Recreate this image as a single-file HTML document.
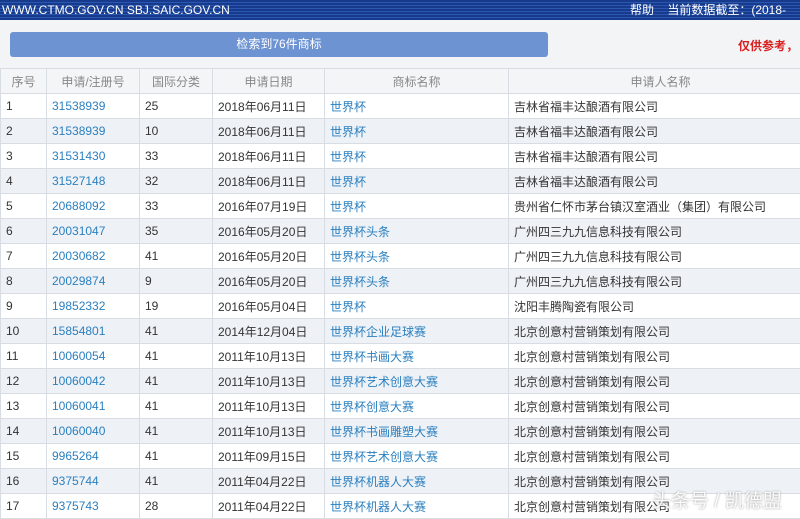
<!DOCTYPE html><html><head><meta charset="utf-8"><style>
*{margin:0;padding:0;box-sizing:border-box}
body{width:800px;height:518px;overflow:hidden;background:#fff;font-family:"Liberation Sans","Noto Sans CJK SC",sans-serif;position:relative}
.top{position:absolute;left:0;top:0;width:800px;height:20px;background:repeating-linear-gradient(180deg,#173a8c 0 2px,#2a57b0 2px 3px);color:#fff;font-size:12px;line-height:20px}
.top .l{position:absolute;left:2px;top:0}
.top .r{position:absolute;left:630px;top:0;white-space:nowrap}
.bar{position:absolute;left:0;top:20px;width:800px;height:48px;background:#f2f4f6}
.btn{position:absolute;left:10px;top:32px;width:538px;height:25px;background:#6d93d3;border-radius:3px;color:#fff;font-size:12px;text-align:center;line-height:25px}
.ref{position:absolute;left:738px;top:37px;color:#d81e1e;font-size:12px;font-weight:bold;white-space:nowrap}
table{position:absolute;left:0;top:68px;border-collapse:collapse;font-size:12px;table-layout:fixed;width:812px}
td,th{height:25px;border:1px solid #d8dde3;padding:0 5px;white-space:nowrap;overflow:hidden;color:#333;font-weight:normal;text-align:left}
th{background:#f4f5f7;color:#888;text-align:center}
tr:nth-child(odd) td{background:#eef2f7}
td.a{color:#2a7fbf}
.wm{position:absolute;left:652px;top:486px;color:rgba(255,255,255,.9);font-size:19px;text-shadow:0 0 2px #999;white-space:nowrap}
</style></head><body>
<div class="top"><span class="l">WWW.CTMO.GOV.CN SBJ.SAIC.GOV.CN</span><span class="r">帮助 &nbsp;&nbsp;&nbsp;当前数据截至：(2018-</span></div>
<div class="bar"></div>
<div class="btn">检索到76件商标</div>
<div class="ref">仅供参考，</div>
<table>
<colgroup><col style="width:46px"><col style="width:93px"><col style="width:73px"><col style="width:112px"><col style="width:184px"><col style="width:304px"></colgroup>
<tr><th>序号</th><th>申请/注册号</th><th>国际分类</th><th>申请日期</th><th>商标名称</th><th>申请人名称</th></tr>
<tr><td>1</td><td class="a">31538939</td><td>25</td><td>2018年06月11日</td><td class="a">世界杯</td><td>吉林省福丰达酿酒有限公司</td></tr>
<tr><td>2</td><td class="a">31538939</td><td>10</td><td>2018年06月11日</td><td class="a">世界杯</td><td>吉林省福丰达酿酒有限公司</td></tr>
<tr><td>3</td><td class="a">31531430</td><td>33</td><td>2018年06月11日</td><td class="a">世界杯</td><td>吉林省福丰达酿酒有限公司</td></tr>
<tr><td>4</td><td class="a">31527148</td><td>32</td><td>2018年06月11日</td><td class="a">世界杯</td><td>吉林省福丰达酿酒有限公司</td></tr>
<tr><td>5</td><td class="a">20688092</td><td>33</td><td>2016年07月19日</td><td class="a">世界杯</td><td>贵州省仁怀市茅台镇汉室酒业（集团）有限公司</td></tr>
<tr><td>6</td><td class="a">20031047</td><td>35</td><td>2016年05月20日</td><td class="a">世界杯头条</td><td>广州四三九九信息科技有限公司</td></tr>
<tr><td>7</td><td class="a">20030682</td><td>41</td><td>2016年05月20日</td><td class="a">世界杯头条</td><td>广州四三九九信息科技有限公司</td></tr>
<tr><td>8</td><td class="a">20029874</td><td>9</td><td>2016年05月20日</td><td class="a">世界杯头条</td><td>广州四三九九信息科技有限公司</td></tr>
<tr><td>9</td><td class="a">19852332</td><td>19</td><td>2016年05月04日</td><td class="a">世界杯</td><td>沈阳丰腾陶瓷有限公司</td></tr>
<tr><td>10</td><td class="a">15854801</td><td>41</td><td>2014年12月04日</td><td class="a">世界杯企业足球赛</td><td>北京创意村营销策划有限公司</td></tr>
<tr><td>11</td><td class="a">10060054</td><td>41</td><td>2011年10月13日</td><td class="a">世界杯书画大赛</td><td>北京创意村营销策划有限公司</td></tr>
<tr><td>12</td><td class="a">10060042</td><td>41</td><td>2011年10月13日</td><td class="a">世界杯艺术创意大赛</td><td>北京创意村营销策划有限公司</td></tr>
<tr><td>13</td><td class="a">10060041</td><td>41</td><td>2011年10月13日</td><td class="a">世界杯创意大赛</td><td>北京创意村营销策划有限公司</td></tr>
<tr><td>14</td><td class="a">10060040</td><td>41</td><td>2011年10月13日</td><td class="a">世界杯书画雕塑大赛</td><td>北京创意村营销策划有限公司</td></tr>
<tr><td>15</td><td class="a">9965264</td><td>41</td><td>2011年09月15日</td><td class="a">世界杯艺术创意大赛</td><td>北京创意村营销策划有限公司</td></tr>
<tr><td>16</td><td class="a">9375744</td><td>41</td><td>2011年04月22日</td><td class="a">世界杯机器人大赛</td><td>北京创意村营销策划有限公司</td></tr>
<tr><td>17</td><td class="a">9375743</td><td>28</td><td>2011年04月22日</td><td class="a">世界杯机器人大赛</td><td>北京创意村营销策划有限公司</td></tr>
</table>
<div class="wm">头条号 / 凯德盟</div>
</body></html>
